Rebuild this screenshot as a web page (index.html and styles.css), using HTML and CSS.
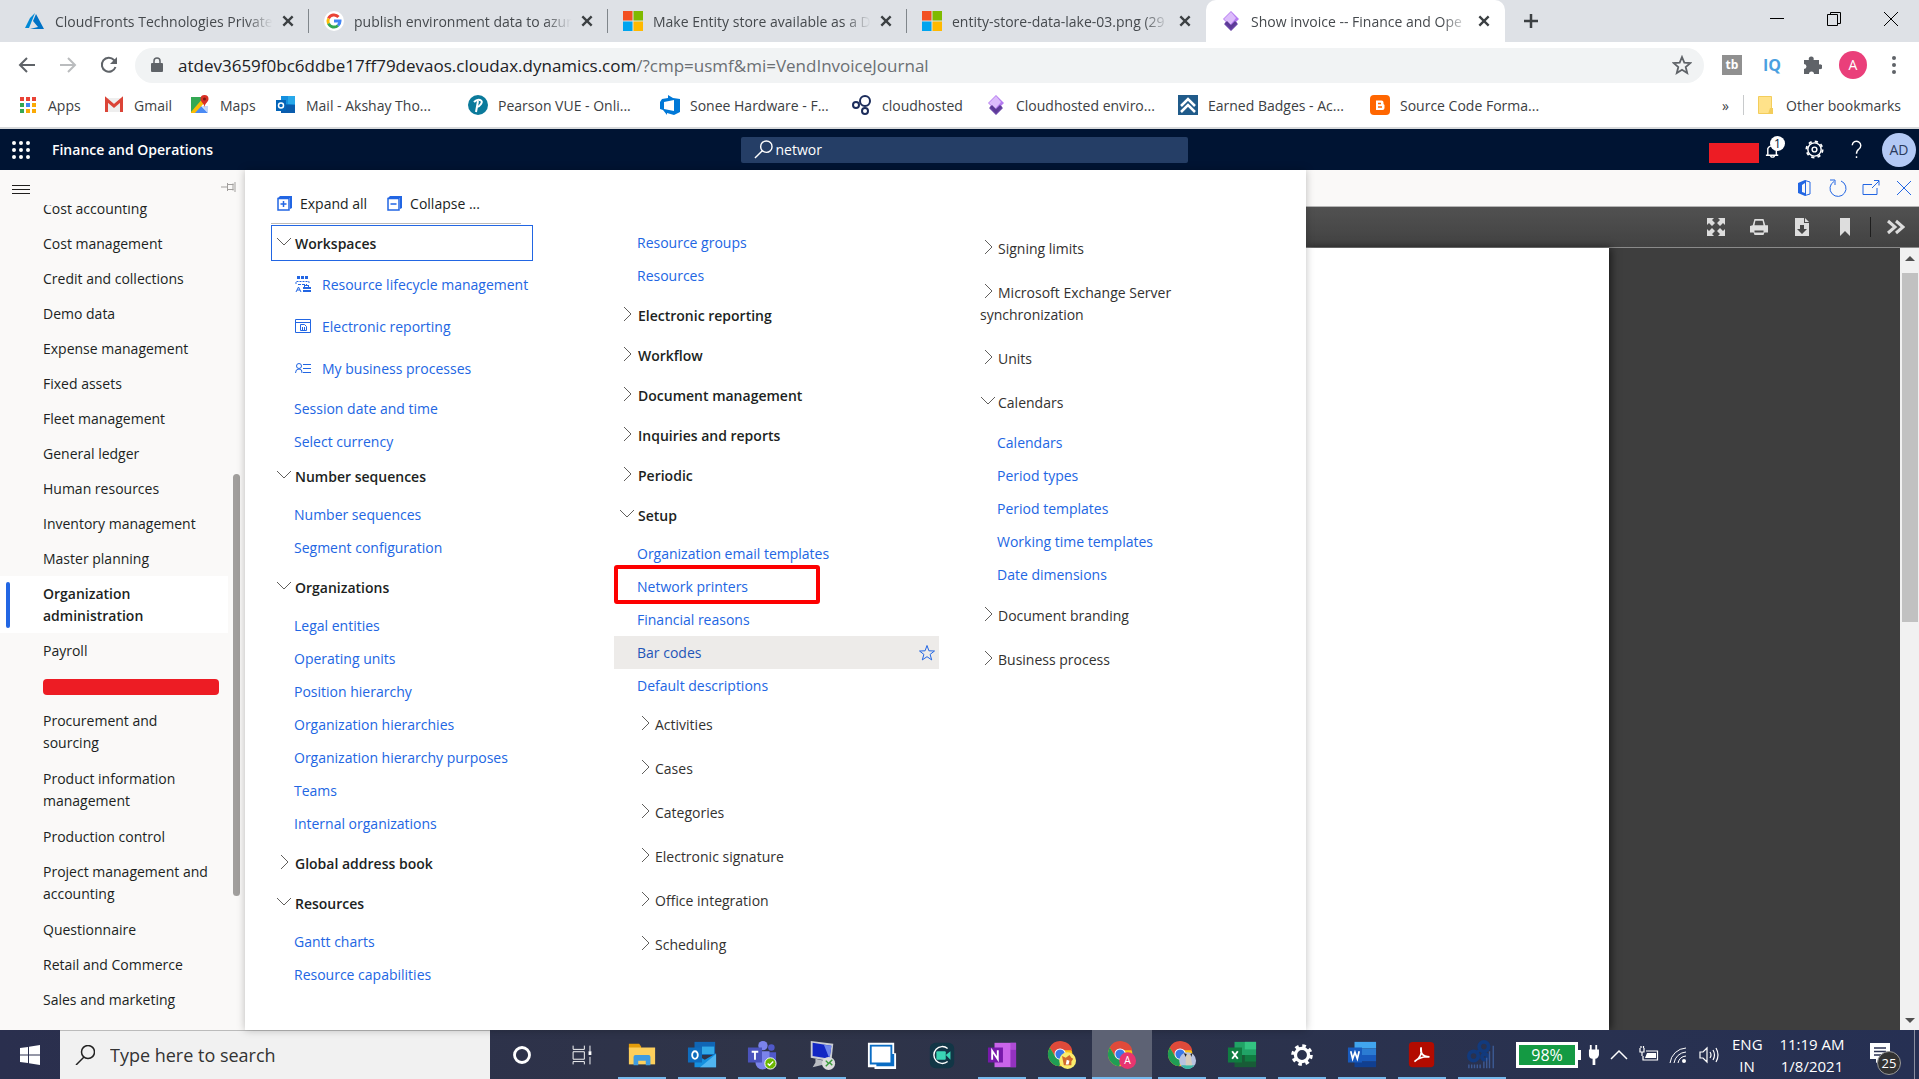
FILE: index.html
```html
<!DOCTYPE html>
<html lang="en">
<head>
<meta charset="UTF-8">
<meta name="viewport" content="width=device-width, initial-scale=1.0">
<title>Show invoice -- Finance and Operations</title>
<link rel="stylesheet" href="styles.css">
</head>
<body>

<svg class="sprite" aria-hidden="true">
<symbol id="down" viewBox="0 0 16 16"><path d="M1 4l7 7 7-7" fill="none" stroke="#605e5c"/></symbol>
<symbol id="right" viewBox="0 0 16 16"><path d="M5 1l7 7-7 7" fill="none" stroke="#605e5c"/></symbol>
<symbol id="cross" viewBox="0 0 12 12"><path d="M2 2l8 8M10 2l-8 8" fill="none" stroke="#3c4043" stroke-width="2"/></symbol>
<symbol id="ms" viewBox="0 0 20 20"><path fill="#f25022" d="M0 0h9.500v9.500H0z"/><path fill="#7fba00" d="M10.500 0H20v9.500h-9.500z"/><path fill="#00a4ef" d="M0 10.500h9.500V20H0z"/><path fill="#ffb900" d="M10.500 10.500H20V20h-9.500z"/></symbol>
<symbol id="lcs" viewBox="0 0 20 20"><path fill="#6b46a8" d="M10 20l-7-7 3-3 4 3 4-3 3 3z"/><path fill="#b57bf0" d="M10 0l8 8-8 8-8-8z"/><path fill="#dcbcfb" d="M10 1l5 6-6 7-6-6z"/><path fill="#5c3a96" d="M4 12l2-2 4 4 4-4 2 2-6 6z"/></symbol>
<symbol id="chrome" viewBox="0 0 32 32"><circle cx="14" cy="15" r="13" fill="#fbc116"/><path fill="#e04a3a" d="M3 8a13 13 0 0 1 24 3H14l-5 7z"/><path fill="#1f9d55" d="M3 8l6 10 6 4-2 6A13 13 0 0 1 3 8z"/><circle cx="14" cy="15" r="6" fill="#fff"/><circle cx="14" cy="15" r="5" fill="#3b78e7"/></symbol>
</svg>

<header class="tabs">
<div class="tab">
<svg class="icon" viewBox="0 0 20 20"><path fill="#0089d6" d="M10 2L5 7 0 17h4z"/><path fill="#0072c6" d="M11 3l8 15H5l8-2-5-6z"/></svg>
<span class="tab-title">CloudFronts Technologies Private</span>
<button class="tab-close" aria-label="Close"><svg><use href="#cross"/></svg></button>
</div>
<div class="tab">
<svg class="icon" viewBox="0 0 20 20"><circle cx="10" cy="10" r="10" fill="#fff"/><g fill="none" stroke-width="3"><path stroke="#ea4335" d="M4.500 7.500A6 6 0 0 1 14.500 6"/><path stroke="#fbbc05" d="M4.500 7.500a6 6 0 0 0 0 5"/><path stroke="#34a853" d="M4.500 12.500a6 6 0 0 0 9.500 2"/><path stroke="#4285f4" d="M14 14.500a6 6 0 0 0 2-4.500h-6"/></g></svg>
<span class="tab-title">publish environment data to azur</span>
<button class="tab-close" aria-label="Close"><svg><use href="#cross"/></svg></button>
</div>
<div class="tab">
<svg class="icon"><use href="#ms"/></svg>
<span class="tab-title">Make Entity store available as a D</span>
<button class="tab-close" aria-label="Close"><svg><use href="#cross"/></svg></button>
</div>
<div class="tab last">
<svg class="icon"><use href="#ms"/></svg>
<span class="tab-title">entity-store-data-lake-03.png (29</span>
<button class="tab-close" aria-label="Close"><svg><use href="#cross"/></svg></button>
</div>
<div class="tab active">
<svg class="icon"><use href="#lcs"/></svg>
<span class="tab-title">Show invoice -- Finance and Ope</span>
<button class="tab-close" aria-label="Close"><svg><use href="#cross"/></svg></button>
</div>
<button class="new-tab" aria-label="New tab"><svg viewBox="0 0 16 16"><path d="M8 1v14M1 8h14" stroke="#3c4043" stroke-width="2.500"/></svg></button>
<div class="window-buttons">
<button aria-label="Minimize"><svg viewBox="0 0 14 14"><path d="M0 6.500h14" stroke="#000"/></svg></button>
<button aria-label="Restore"><svg viewBox="0 0 14 14"><path d="M.5 2.500h10v11H.5zM3.500 2.500v-2h10v11h-3" fill="none" stroke="#000"/></svg></button>
<button aria-label="Close window"><svg viewBox="0 0 14 14"><path d="M0 0l14 14M14 0L0 14" stroke="#000"/></svg></button>
</div>
</header>

<div class="toolbar">
<button class="nav-btn" aria-label="Back"><svg viewBox="0 0 18 18"><path d="M17 9H2M9 2L2 9l7 7" fill="none" stroke="#5f6368" stroke-width="2"/></svg></button>
<button class="nav-btn" aria-label="Forward"><svg viewBox="0 0 18 18"><path d="M1 9h15M9 2l7 7-7 7" fill="none" stroke="#babcbe" stroke-width="2"/></svg></button>
<button class="nav-btn" aria-label="Reload"><svg viewBox="0 0 18 18"><path d="M15.500 11A7 7 0 1 1 14 4l2 2" fill="none" stroke="#5f6368" stroke-width="2"/><path fill="#5f6368" d="M17 1v7h-7z"/></svg></button>
<div class="omnibox">
<svg class="lock" viewBox="0 0 12 16"><path d="M3 7V4a3 3 0 0 1 6 0v3" fill="none" stroke="#5f6368" stroke-width="1.500"/><rect y="6" width="12" height="9" rx="1" fill="#5f6368"/></svg>
<span class="url">atdev3659f0bc6ddbe17ff79devaos.cloudax.dynamics.com<span>/?cmp=usmf&amp;mi=VendInvoiceJournal</span></span>
<svg class="fav" viewBox="0 0 20 20"><path d="M10 2l2.300 5.600 6 .5-4.600 3.900 1.500 6L10 14.800 4.800 18l1.500-6L1.700 8.100l6-.5z" fill="none" stroke="#5f6368" stroke-width="1.800"/></svg>
</div>
<div class="extensions">
<span class="ext-tb">tb</span>
<span class="ext-iq">IQ</span>
<svg class="icon" viewBox="0 0 20 20"><path fill="#5f6368" d="M2 5h5a2.500 2.500 0 1 1 4.500 0H17v4.500a2.500 2.500 0 1 1 0 4.500v5h-5a2.500 2.500 0 0 0-5 0H2v-5a2.500 2.500 0 0 0 0-5z"/></svg>
<span class="ext-user">A</span>
<svg class="icon" viewBox="0 0 20 20"><g fill="#5f6368"><circle cx="10" cy="3" r="2"/><circle cx="10" cy="10" r="2"/><circle cx="10" cy="17" r="2"/></g></svg>
</div>
</div>

<nav class="bookmarks">
<a href="#" class="bm"><svg class="icon" viewBox="0 0 20 20"><g fill="#ea4335"><path d="M2 2h4v4H2zM8 2h4v4H8zM14 2h4v4h-4z"/></g><path fill="#34a853" d="M2 8h4v4H2zM2 14h4v4H2z"/><path fill="#4285f4" d="M8 8h4v4H8z"/><path fill="#fbaa05" d="M14 8h4v4h-4zM8 14h4v4H8zM14 14h4v4h-4z"/></svg>Apps</a>
<a href="#" class="bm"><svg class="icon" viewBox="0 0 20 20"><path fill="#eee" d="M1 3h18v14H1z"/><path d="M2.500 17V4.500L10 11l7.500-6.500V17" fill="none" stroke="#db4437" stroke-width="3"/></svg>Gmail</a>
<a href="#" class="bm"><svg class="icon" viewBox="0 0 20 20"><path fill="#34a853" d="M1 2h13L3 18H1z"/><path fill="#4a8af4" d="M10 10l8 8H3z"/><path fill="#fbbc05" d="M14 2l3 3L5 18H1v-1z"/><path fill="#c3d5f8" d="M12 11h6v7z"/><path fill="#d93025" d="M14.500 0a4 4 0 0 1 4 4c0 3-3.500 4-4 8-.5-4-4-5-4-8a4 4 0 0 1 4-4z"/><circle cx="14.500" cy="4" r="1.500" fill="#7d1a12"/></svg>Maps</a>
<a href="#" class="bm wide"><svg class="icon" viewBox="0 0 20 20"><path fill="#1490df" d="M5 1h14v15H5z"/><path fill="#28a8ea" d="M12 1h7v8h-7z"/><path fill="#0a5cad" d="M5 9l14 1v8H5z"/><path fill="#0364b8" d="M0 5h10v11H0z"/><circle cx="5" cy="10.500" r="2.500" fill="none" stroke="#fff" stroke-width="1.500"/></svg>Mail - Akshay Tho...</a>
<a href="#" class="bm wide"><svg class="icon" viewBox="0 0 20 20"><circle cx="10" cy="10" r="10" fill="#0b7a9b"/><path d="M8 17l2-11M6 7q3-3 6-2t1 4-4 3" fill="none" stroke="#fff" stroke-width="2"/></svg>Pearson VUE - Onli...</a>
<a href="#" class="bm wide"><svg class="icon" viewBox="0 0 20 20"><path d="M0 7l2-3 6-1V0l5 3 7 1v13l-6 3-7-2v2l-4-5-3-1z" fill="#0078d7"/><path fill="#fff" d="M4 7l10-2v11L4 14z"/></svg>Sonee Hardware - F...</a>
<a href="#" class="bm medium"><svg class="icon" viewBox="0 0 20 20"><g fill="none" stroke="#1b2c5b" stroke-width="2"><circle cx="13" cy="6" r="5"/><circle cx="4" cy="10" r="3"/><circle cx="13" cy="16" r="3"/></g></svg>cloudhosted</a>
<a href="#" class="bm wide"><svg class="icon"><use href="#lcs"/></svg>Cloudhosted enviro...</a>
<a href="#" class="bm wide"><svg class="icon" viewBox="0 0 20 20"><path fill="#205b8a" d="M0 0h20v20H0z"/><path d="M3 11l7-7 7 7M3 17l7-7 7 7" fill="none" stroke="#fff" stroke-width="2.500"/></svg>Earned Badges - Ac...</a>
<a href="#" class="bm wide"><svg class="icon" viewBox="0 0 20 20"><rect width="20" height="20" rx="4" fill="#ff6600"/><path d="M6 5.500h5.500a2 2 0 0 1 2 2V9l1 1v3a2 2 0 0 1-2 2H6z" fill="#fff"/><path d="M8 8.500h3M8 12h4" stroke="#ff6600" stroke-width="1.500"/></svg>Source Code Forma...</a>
<div class="bm-other">
<span class="more">»</span>
<a href="#"><svg class="icon" viewBox="0 0 20 20"><path fill="#ffe28a" stroke="#f3cd5b" d="M2.500 1.500h13v17h-13z"/><path fill="#f3cd5b" d="M14 13h3v6h-5z"/></svg>Other bookmarks</a>
</div>
</nav>

<header class="app-header">
<div class="brand">
<button class="waffle" aria-label="App launcher"><svg viewBox="0 0 18 18"><path d="M2 2h18M2 9h18M2 16h18" stroke="#fff" stroke-width="4" stroke-linecap="round" stroke-dasharray="0 7"/></svg></button>
<span class="app-title">Finance and Operations</span>
</div>
<label class="app-search">
<svg viewBox="0 0 20 20"><circle cx="13" cy="7" r="6" fill="none" stroke="#fff" stroke-width="1.500"/><path d="M9 11l-8 8" stroke="#fff" stroke-width="1.500"/></svg>
<input type="text" value="networ" aria-label="Search for a page">
</label>
<div class="app-actions">
<span class="masked"></span>
<button class="bell" aria-label="Notifications"><svg viewBox="0 0 20 20"><path d="M2 16h13M4 16V9a5 5 0 0 1 9 0v7M7 16a2 2 0 0 0 4 0" fill="none" stroke="#fff" stroke-width="1.500"/></svg><span>1</span></button>
<button class="gear" aria-label="Settings"><svg viewBox="0 0 20 20"><circle cx="10" cy="10" r="7" fill="none" stroke="#fff" stroke-width="1.500"/><circle cx="10" cy="10" r="8.500" fill="none" stroke="#fff" stroke-width="2" stroke-dasharray="3.340 3.340"/><circle cx="10" cy="10" r="2.500" fill="none" stroke="#fff" stroke-width="1.500"/></svg></button>
<button class="help" aria-label="Help"><svg viewBox="0 0 20 20"><path d="M5.500 5.500a4.500 4.500 0 1 1 7 4Q10 11 10 14.500M10 17v2" fill="none" stroke="#fff" stroke-width="1.500"/></svg></button>
<span class="avatar">AD</span>
</div>
</header>

<main class="workspace">
<aside class="side">
<div class="side-top">
<button aria-label="Expand navigation"><svg viewBox="0 0 18 10"><path d="M0 .5h18M0 4.500h18M0 8.500h18" stroke="#201f1e"/></svg></button>
<svg class="pin" viewBox="0 0 15 10"><path d="M0 5h6M6.500 1v8M6.500 2.500h6M6.500 7.500h6M14 0v10M12 1.500v7" fill="none" stroke="#a19f9d"/></svg>
</div>
<div class="side-scroll">
<ul>
<li><a href="#">Cost accounting</a></li>
<li><a href="#">Cost management</a></li>
<li><a href="#">Credit and collections</a></li>
<li><a href="#">Demo data</a></li>
<li><a href="#">Expense management</a></li>
<li><a href="#">Fixed assets</a></li>
<li><a href="#">Fleet management</a></li>
<li><a href="#">General ledger</a></li>
<li><a href="#">Human resources</a></li>
<li><a href="#">Inventory management</a></li>
<li><a href="#">Master planning</a></li>
<li class="selected"><a href="#">Organization administration</a></li>
<li><a href="#">Payroll</a></li>
<li><a href="#" aria-label="Hidden module"><span class="redacted"></span></a></li>
<li class="tall"><a href="#">Procurement and sourcing</a></li>
<li class="tall"><a href="#">Product information management</a></li>
<li><a href="#">Production control</a></li>
<li class="tall"><a href="#">Project management and accounting</a></li>
<li><a href="#">Questionnaire</a></li>
<li><a href="#">Retail and Commerce</a></li>
<li><a href="#">Sales and marketing</a></li>
<li><a href="#">Service management</a></li>
</ul>
</div>
<div class="side-thumb"></div>
</aside>

<section class="panel">
<div class="panel-tools">
<button><svg viewBox="0 0 15 15"><path fill="#2266e3" d="M3 0h12v12l-2 1V2H1z"/><path d="M1 2.500h11v11.500H1zM3.500 8h6M6.500 5v6" fill="none" stroke="#2266e3" stroke-width="1.500"/></svg>Expand all</button>
<button><svg viewBox="0 0 15 15"><path fill="#2266e3" d="M3 0h12v12l-2 1V2H1z"/><path d="M1 2.500h11v11.500H1zM3.500 8h6" fill="none" stroke="#2266e3" stroke-width="1.500"/></svg>Collapse ...</button>
</div>
<div class="columns">
<div class="col">
<h3 class="focused"><svg><use href="#down"/></svg>Workspaces</h3>
<ul class="spaces">
<li><a href="#"><svg viewBox="0 0 16 16"><g fill="none" stroke="#2266e3"><path d="M2 1.500h11" stroke-width="3" stroke-dasharray="3 1"/><path d="M1 8V5.500h13V8" stroke-dasharray="2 1"/><path d="M3 8.500h9" stroke-dasharray="3 1"/><path d="M1 16l2.500-5L6 16M2 14h3"/></g><path fill="#2266e3" d="M9 9h5v2h2v5H8v-5h1z"/><path d="M8 13.500h8M10 10.500h3" stroke="#fff"/></svg>Resource lifecycle management</a></li>
<li><a href="#"><svg viewBox="0 0 16 16"><g fill="none" stroke="#2266e3"><path d="M.5 1.500h15v13H.5zM.5 4.500h15"/><path d="M5.500 6.500h4l2 2v4h-6z"/><path d="M7.500 9v3M9.500 9v3"/></g></svg>Electronic reporting</a></li>
<li><a href="#"><svg viewBox="0 0 16 16"><g fill="none" stroke="#2266e3"><circle cx="4" cy="6" r="2.500"/><path d="M.5 13q0-4 3.500-4t3 4M8 4.500h8M8 8.500h8M8 12.500h8"/></g></svg>My business processes</a></li>
</ul>
<ul class="links">
<li><a href="#">Session date and time</a></li>
<li><a href="#">Select currency</a></li>
</ul>
<h3><svg><use href="#down"/></svg>Number sequences</h3>
<ul class="links spaced">
<li><a href="#">Number sequences</a></li>
<li><a href="#">Segment configuration</a></li>
</ul>
<h3><svg><use href="#down"/></svg>Organizations</h3>
<ul class="links spaced">
<li><a href="#">Legal entities</a></li>
<li><a href="#">Operating units</a></li>
<li><a href="#">Position hierarchy</a></li>
<li><a href="#">Organization hierarchies</a></li>
<li><a href="#">Organization hierarchy purposes</a></li>
<li><a href="#">Teams</a></li>
<li><a href="#">Internal organizations</a></li>
</ul>
<h3><svg><use href="#right"/></svg>Global address book</h3>
<h3><svg><use href="#down"/></svg>Resources</h3>
<ul class="links">
<li><a href="#">Gantt charts</a></li>
<li><a href="#">Resource capabilities</a></li>
</ul>
</div>

<div class="col next">
<ul class="links spaced">
<li><a href="#">Resource groups</a></li>
<li><a href="#">Resources</a></li>
</ul>
<h3><svg><use href="#right"/></svg>Electronic reporting</h3>
<h3><svg><use href="#right"/></svg>Workflow</h3>
<h3><svg><use href="#right"/></svg>Document management</h3>
<h3><svg><use href="#right"/></svg>Inquiries and reports</h3>
<h3><svg><use href="#right"/></svg>Periodic</h3>
<h3><svg><use href="#down"/></svg>Setup</h3>
<ul class="links">
<li><a href="#">Organization email templates</a></li>
<li class="marked"><a href="#">Network printers</a></li>
<li><a href="#">Financial reasons</a></li>
<li class="hovered"><a href="#">Bar codes</a><svg viewBox="0 0 18 18"><path d="M9 1.500l1.900 5.300 5.600.2-4.400 3.400 1.600 5.500L9 12.700l-4.700 3.200 1.600-5.500L1.500 7l5.600-.2z" fill="none" stroke="#2266e3"/></svg></li>
<li><a href="#">Default descriptions</a></li>
</ul>
<h4><svg><use href="#right"/></svg>Activities</h4>
<h4><svg><use href="#right"/></svg>Cases</h4>
<h4><svg><use href="#right"/></svg>Categories</h4>
<h4><svg><use href="#right"/></svg>Electronic signature</h4>
<h4><svg><use href="#right"/></svg>Office integration</h4>
<h4><svg><use href="#right"/></svg>Scheduling</h4>
</div>

<div class="col next">
<h4><svg><use href="#right"/></svg>Signing limits</h4>
<h4><svg><use href="#right"/></svg>Microsoft Exchange Server synchronization</h4>
<h4><svg><use href="#right"/></svg>Units</h4>
<h4><svg><use href="#down"/></svg>Calendars</h4>
<ul class="links sub">
<li><a href="#">Calendars</a></li>
<li><a href="#">Period types</a></li>
<li><a href="#">Period templates</a></li>
<li><a href="#">Working time templates</a></li>
<li><a href="#">Date dimensions</a></li>
</ul>
<h4><svg><use href="#right"/></svg>Document branding</h4>
<h4><svg><use href="#right"/></svg>Business process</h4>
</div>
</div>
</section>

<section class="viewer">
<div class="form-tools">
<button aria-label="Open in Office"><svg viewBox="0 0 18 18"><path fill="#2266e3" d="M2 4l7-3v3L6 6v7l3 1v3l-7-3z"/><path d="M9 1.500l5 1.500v12l-5 1.500M9.500 1.500v15" fill="none" stroke="#2266e3"/></svg></button>
<button aria-label="Refresh"><svg viewBox="0 0 18 18"><path d="M5 2.500A8 8 0 1 0 12 2M1 1h5v5" fill="none" stroke="#2266e3"/></svg></button>
<button aria-label="Open in new window"><svg viewBox="0 0 18 18"><path d="M10 5.500H1v10h14V9M10 9l7-7M12 1.500h5v5" fill="none" stroke="#2266e3"/></svg></button>
<button aria-label="Close page"><svg viewBox="0 0 18 18"><path d="M2 2l14 14M16 2L2 16" fill="none" stroke="#2266e3"/></svg></button>
</div>
<div class="pdf-tools">
<button aria-label="Presentation mode"><svg viewBox="0 0 18 18"><path fill="#ddd" d="M0 0h7L5 2l3 3-3 3-3-3-2 2zM18 0v7l-2-2-3 3-3-3 3-3-2-2zM0 18v-7l2 2 3-3 3 3-3 3 2 2zM18 18h-7l2-2-3-3 3-3 3 3 2-2z"/></svg></button>
<button aria-label="Print"><svg viewBox="0 0 20 18"><path fill="#ddd" d="M5 0h10l2 7h3v8h-4l-1 3H5l-1-3H0V8l3-1z"/><path fill="#484848" d="M6 2h8l1 5H5zM5 13h10v2H5z"/></svg></button>
<button aria-label="Download"><svg viewBox="0 0 18 18"><path fill="#ddd" d="M2 0h9v5h5v13H2zM12 0l4 4h-4z"/><path fill="#484848" d="M7 7h4v4h3l-5 5-5-5h3z"/></svg></button>
<button aria-label="Bookmark"><svg viewBox="0 0 18 18"><path fill="#ddd" d="M4 0h10v18l-5-5-5 5z"/></svg></button>
<span class="split"></span>
<button aria-label="Tools"><svg viewBox="0 0 18 18"><path d="M1 3l7 6-7 6M9 3l7 6-7 6" fill="none" stroke="#ddd" stroke-width="3"/></svg></button>
</div>
<div class="pdf-body">
<div class="pdf-page"></div>
<div class="pdf-scroll">
<span class="arrow up"></span>
<span class="thumb"></span>
<span class="arrow down"></span>
</div>
</div>
</section>
</main>

<footer class="taskbar">
<button class="start" aria-label="Start"><svg viewBox="0 0 20 20"><path fill="#fff" d="M0 3l8-1v7.500H0zM9 1.800L20 0v9.500H9zM0 10.500h8V18l-8-1zM9 10.500h11V20L9 18.200z"/></svg></button>
<label class="task-search">
<svg viewBox="0 0 20 20"><circle cx="13" cy="7" r="6.500" fill="none" stroke="#222" stroke-width="1.500"/><path d="M9 12l-8 8" stroke="#222" stroke-width="1.500"/></svg>
<input type="text" placeholder="Type here to search" aria-label="Type here to search">
</label>
<div class="apps">
<button aria-label="Cortana"><svg viewBox="0 0 32 32"><circle cx="16" cy="16" r="8" fill="none" stroke="#fff" stroke-width="3"/></svg></button>
<button aria-label="Task view"><svg viewBox="0 0 32 32"><path d="M6.500 6v4h12V6M6.500 12.500h12v8h-12zM6.500 26v-3h12v3M24.500 6v6M24.500 18v8" fill="none" stroke="#fff"/><path fill="#fff" d="M23 12h3v4h-3z"/></svg></button>
<button class="open" aria-label="File Explorer"><svg viewBox="0 0 32 32"><path fill="#e39c0b" d="M2 4h11l2 3v3H2z"/><path fill="#fdcf5c" d="M2 8h28v18H2z"/><path fill="#3f9be0" d="M7 18q0-2 2-2h14q2 0 2 2v9h-5v-5h-8v5H7z"/></svg></button>
<button class="open" aria-label="Outlook"><svg viewBox="0 0 32 32"><path fill="#1066b5" d="M8 2h22v14H8z"/><path fill="#32a9e7" d="M16 7h13v8H16z"/><path fill="#1490df" d="M8 15l11 6 12-7v15H8z"/><path fill="#50b5f0" d="M31 15L14 29h17z"/><path fill="#0f6cbd" d="M1 8h15v16H1z"/><ellipse cx="8.500" cy="16" rx="3" ry="4" fill="none" stroke="#fff" stroke-width="2"/></svg></button>
<button class="open" aria-label="Teams"><svg viewBox="0 0 32 32"><circle cx="17" cy="6" r="5" fill="#7b83eb"/><circle cx="26" cy="8" r="3.500" fill="#5059c9"/><path fill="#5059c9" d="M20 13h11v10a6 6 0 0 1-11 0z"/><path fill="#7b83eb" d="M9 12h15v12a7 7 0 0 1-15 0z"/><path fill="#4b53bc" d="M1 8h15v16H1z"/><path d="M5 12.500h7M8.500 12v9" stroke="#fff" stroke-width="2"/><circle cx="25" cy="25" r="6" fill="#6bb700" stroke="#fff"/><path d="M22 25l2 2 4-4" fill="none" stroke="#fff" stroke-width="1.500"/></svg></button>
<button class="open" aria-label="Remote Desktop"><svg viewBox="0 0 32 32"><path fill="#c9ccd2" d="M4 1l24 3-2 19-22-4z"/><path fill="#1226c4" d="M6 3l20 3-2 14-18-3z"/><path fill="#6e86ec" d="M18 5l8 1-2 14z"/><path fill="#b9bcc2" d="M9 20l9 2v4l-12 3 3-5z"/><circle cx="23" cy="25" r="7" fill="#dcdcdc"/><path d="M20 22l3 3-3 3M27 21l-3 3 3 3" fill="none" stroke="#3a9b3a" stroke-width="1.500"/></svg></button>
<button aria-label="Remote"><svg viewBox="0 0 32 32"><path fill="#fff" d="M1 3h28v11h2v17H8v-2H1z"/><path fill="#0a6cc4" d="M3 5h24v10h2v13H10v-2H3z"/><path fill="#fff" d="M5 7h20v17H5z"/></svg></button>
<button aria-label="Recorder"><svg viewBox="0 0 32 32"><rect x="3" y="3" width="26" height="27" rx="6" fill="#123646"/><path d="M22 9a9 9 0 1 0 0 14" fill="none" stroke="#fff" stroke-width="1.500"/><rect x="10" y="12" width="10" height="9" rx="1" fill="#3ad6b5"/><path fill="#3ad6b5" d="M20 16l5-4v9z"/></svg></button>
<button class="open" aria-label="OneNote"><svg viewBox="0 0 32 32"><path fill="#ca64ea" d="M8 3h23v26H8z"/><path fill="#9332bf" d="M25 10h6v19h-6z"/><path fill="#ae4bd5" d="M25 3h6v7h-6z"/><path fill="#7719aa" d="M1 8h16v16H1z"/><path d="M5.500 21V11.500l6 9V11" fill="none" stroke="#fff" stroke-width="2"/></svg></button>
<button class="open" aria-label="Chrome"><svg viewBox="0 0 32 32"><use href="#chrome"/><circle cx="22" cy="22" r="9" fill="#f9ec6c"/><path fill="#d0692c" d="M16 17l4 2 4-3 2 3 2 1-2 3v4h-8l-1-5z"/><path fill="#fff" d="M21 21l3 1-1 4h-3z"/></svg></button>
<button class="open current" aria-label="Chrome work profile"><svg viewBox="0 0 32 32"><use href="#chrome"/><circle cx="22" cy="22" r="9" fill="#e8356f"/><text x="22" y="26" text-anchor="middle" font-size="11" fill="#fff">A</text></svg></button>
<button class="open" aria-label="Chrome third profile"><svg viewBox="0 0 32 32"><use href="#chrome"/><circle cx="22" cy="22" r="9" fill="#b9c3e0"/><path fill="#3bb8a4" d="M15 27h14q-3 4-7 4t-7-4z"/><path fill="#d8cdbb" d="M20 15l5 1 1 6 1 5h-7z"/><path fill="#222" d="M18 14l3 1-1 3zM25 15l2-1-1 4z"/></svg></button>
<button class="open" aria-label="Excel"><svg viewBox="0 0 32 32"><path fill="#21a366" d="M8 2h23v14H8z"/><path fill="#33c481" d="M19 2h12v8H19z"/><path fill="#185c37" d="M8 16h23v13H8z"/><path fill="#107c41" d="M19 16h12v7H19zM1 8h15v16H1z"/><path d="M5.500 12l6 8M11.500 12l-6 8" stroke="#fff" stroke-width="2"/></svg></button>
<button class="open" aria-label="Settings"><svg viewBox="0 0 32 32"><circle cx="16" cy="16" r="7" fill="none" stroke="#fff" stroke-width="3.500"/><circle cx="16" cy="16" r="9.500" fill="none" stroke="#fff" stroke-width="4" stroke-dasharray="3.730 3.730"/></svg></button>
<button class="open" aria-label="Word"><svg viewBox="0 0 32 32"><path fill="#41a5ee" d="M8 2h23v7H8z"/><path fill="#2b7cd3" d="M8 9h23v7H8z"/><path fill="#185abd" d="M8 16h23v7H8z"/><path fill="#103f91" d="M8 23h23v6H8z"/><path fill="#185abd" d="M1 8h15v16H1z"/><path d="M4 12l2 8 2.500-7 2.500 7 2-8" fill="none" stroke="#fff" stroke-width="1.800"/></svg></button>
<button class="open" aria-label="Acrobat"><svg viewBox="0 0 32 32"><rect x="2" y="2" width="27" height="27" rx="4" fill="#b30b00"/><path d="M8 23q9-5 7-15-2 9 9 10-9-1-16 5z" fill="none" stroke="#fff" stroke-width="1.800"/></svg></button>
<button class="open" aria-label="Services"><svg viewBox="0 0 32 32"><g fill="none" stroke="#123a7d" stroke-width="4"><circle cx="18" cy="7" r="5"/><circle cx="7" cy="17" r="5"/><circle cx="19" cy="18" r="3"/></g><path d="M13 11l-3 3" stroke="#123a7d" stroke-width="3"/><path d="M2 30v-4M5 30v-4M8 30v-4M11 30v-4M14 30v-4M18 30V23M21 30V19M24 30V12M28 30V6" stroke="#3d5a94" stroke-width="1.500"/></svg></button>
</div>
<div class="tray">
<span class="charge">98%</span>
<svg class="plug" viewBox="0 0 12 22"><path fill="#fff" d="M2 0h2v5h4V0h2v5h2v6q-1 4-4 4v7H5v-7q-4 0-4-4V5h1z"/></svg>
<svg class="tray-icon" viewBox="0 0 20 20"><path d="M2 14l8-8 8 8" fill="none" stroke="#fff" stroke-width="1.500"/></svg>
<svg class="tray-icon" viewBox="0 0 20 20"><path d="M7 6h11.500v9H4v-4M1 3v4h4V3M3 7v4M2 1v2M4.500 1v2" fill="none" stroke="#fff" stroke-width="1.200"/><path fill="#fff" d="M8 8h9v5H6z"/></svg>
<svg class="tray-icon" viewBox="0 0 20 20"><g fill="none" stroke="#fff"><path d="M1 18A17 17 0 0 1 17 3M5 18A13 13 0 0 1 17 7M9 18a9 9 0 0 1 8-7"/></g><circle cx="15" cy="16" r="2" fill="#fff"/></svg>
<svg class="tray-icon" viewBox="0 0 20 20"><path d="M1 7h3l4-4v14l-4-4H1zM11 7q2 3 0 6M14 5q3 5 0 10M17 3q4 7 0 14" fill="none" stroke="#fff" stroke-width="1.200"/></svg>
<span class="lang">ENG<br>IN</span>
<span class="clock">11:19 AM<br>1/8/2021</span>
<div class="notes"><svg viewBox="0 0 20 20"><path fill="#fff" d="M0 0h20v16h-8l-6 4v-4H0z"/><path d="M4 5h12M4 8.500h12M4 12h8" stroke="#2a3152" stroke-width="1.500"/></svg><span>25</span></div>
<span class="peek"></span>
</div>
</footer>

</body>
</html>
```

FILE: styles.css
```css
*,
*::before,
*::after {
box-sizing: border-box;
}

body {
margin: 0;
height: 100vh;
overflow: hidden;
display: flex;
flex-direction: column;
font-family: "Open Sans", "Noto Sans", sans-serif;
font-size: 14px;
color: #201f1e;
background: #fff;
}

a {
color: inherit;
text-decoration: none;
}

button {
display: flex;
align-items: center;
justify-content: center;
padding: 0;
border: 0;
background: none;
font: inherit;
color: inherit;
}

input {
border: 0;
padding: 0;
background: none;
font: inherit;
outline: none;
}

ul {
list-style: none;
margin: 0;
padding: 0;
}

svg {
flex: none;
}

.sprite {
display: none;
}

.icon {
width: 20px;
height: 20px;
}

/* browser tabs */
.tabs {
display: flex;
flex: none;
height: 42px;
padding-left: 10px;
background: #dee1e6;
color: #45494d;
}

.tab {
display: flex;
align-items: center;
flex: 0 1 299px;
min-width: 0;
padding: 0 14px 0 15px;
position: relative;
}

.tab::after {
content: "";
position: absolute;
right: 0;
top: 9px;
width: 1px;
height: 24px;
background: #80868b;
}

.tab.last::after,
.tab.active::after {
display: none;
}

.tab.active {
background: #fff;
border-radius: 10px 10px 0 0;
}

.tab-title {
flex: 1;
min-width: 0;
margin: 0 4px 0 10px;
overflow: hidden;
white-space: nowrap;
mask-image: linear-gradient(to right, #000 86%, transparent 98%);
}

.tab-close svg {
width: 14px;
height: 14px;
}

.new-tab {
width: 52px;
}

.new-tab svg {
width: 16px;
height: 16px;
}

.window-buttons {
display: flex;
margin-left: auto;
}

.window-buttons button {
width: 57px;
height: 38px;
}

.window-buttons svg {
width: 14px;
height: 14px;
}

/* address bar */
.toolbar {
display: flex;
align-items: center;
flex: none;
height: 46px;
padding-left: 6px;
}

.nav-btn {
width: 41px;
}

.nav-btn svg {
width: 18px;
height: 18px;
}

.omnibox {
display: flex;
align-items: center;
flex: 1;
height: 35px;
margin-left: 6px;
padding: 0 12px 0 16px;
border-radius: 18px;
background: #f1f3f4;
}

.lock {
width: 12px;
height: 16px;
}

.url {
flex: 1;
margin-left: 15px;
font-size: 17px;
color: #202124;
}

.url span {
color: #6b6f73;
}

.fav {
width: 20px;
height: 20px;
}

.extensions {
display: flex;
align-items: center;
gap: 20px;
padding: 0 15px 0 18px;
}

.ext-tb,
.ext-iq,
.ext-user {
width: 20px;
text-align: center;
font-weight: 700;
}

.ext-tb {
line-height: 20px;
background: #909090;
color: #fff;
font-size: 12px;
}

.ext-iq {
color: #4a9fe0;
font-size: 16px;
}

.ext-user {
width: 28px;
margin: 0 -3px;
line-height: 28px;
border-radius: 50%;
background: #ea3f7a;
color: #fff;
font-weight: 400;
}

/* bookmarks */
.bookmarks {
display: flex;
flex: none;
height: 41px;
padding: 0 18px;
border-bottom: 2px solid #d8dadc;
color: #3c4043;
white-space: nowrap;
}

.bm {
display: flex;
align-items: center;
gap: 10px;
width: 86px;
height: 34px;
}

.bm.wide {
width: 192px;
}

.bm.medium {
width: 134px;
}

.bm-other {
display: flex;
align-items: center;
gap: 14px;
height: 34px;
margin-left: auto;
}

.bm-other a {
display: flex;
align-items: center;
gap: 10px;
padding-left: 12px;
border-left: 1px solid #c8cacc;
}

/* app header */
.app-header {
display: flex;
align-items: center;
flex: none;
height: 41px;
background: #001433;
color: #fff;
}

.brand {
display: flex;
align-items: center;
flex: 1;
}

.waffle {
width: 42px;
}

.waffle svg {
width: 18px;
height: 18px;
}

.app-title {
margin-left: 10px;
font-weight: 600;
}

.app-search {
display: flex;
align-items: center;
width: 447px;
height: 26px;
margin-left: 12px;
padding-left: 13px;
border-radius: 2px;
background: #253e66;
}

.app-search svg {
width: 19px;
height: 19px;
}

.app-search input {
flex: 1;
margin-left: 3px;
color: #fff;
}

.app-actions {
display: flex;
align-items: center;
justify-content: flex-end;
flex: 1;
padding-right: 3px;
}

.app-actions button {
width: 42px;
}

.app-actions svg {
width: 19px;
height: 19px;
}

.app-actions .bell {
width: 34px;
position: relative;
}

.bell svg {
margin-right: 5px;
}

.bell span {
position: absolute;
left: 11px;
top: -4px;
width: 15px;
border-radius: 50%;
background: #fff;
color: #001433;
font-size: 12px;
line-height: 15px;
}

.masked {
width: 50px;
height: 20px;
margin-top: 6px;
background: #ed1c24;
}

.avatar {
width: 34px;
margin-left: 5px;
border-radius: 50%;
background: #b3c9f5;
color: #2a3a5c;
line-height: 34px;
text-align: center;
}

/* page body */
.workspace {
display: flex;
flex: 1;
min-height: 0;
background: #faf9f8;
}

.side {
position: relative;
display: flex;
flex-direction: column;
flex: none;
width: 245px;
}

.side-top {
display: flex;
align-items: flex-start;
justify-content: space-between;
flex: none;
height: 35px;
padding: 12px 9px 0 12px;
}

.side-top button {
padding-top: 3px;
}

.side-top button svg {
width: 18px;
height: 10px;
}

.pin {
width: 15px;
height: 10px;
}

.side-scroll {
flex: 1;
overflow: hidden;
}

.side-scroll ul {
width: 228px;
margin-top: -14px;
}

.side li {
position: relative;
padding: 7px 12px 6px 43px;
line-height: 22px;
}

.side li.tall {
padding-bottom: 7px;
}

.side li.selected {
background: #fff;
font-weight: 600;
}

.side li.selected::before {
content: "";
position: absolute;
left: 6px;
top: 6px;
bottom: 5px;
width: 4px;
border-radius: 2px;
background: #2266e3;
}

.redacted {
display: block;
width: 176px;
height: 16px;
margin: 4px 0 2px;
border-radius: 4px;
background: #ed1c24;
}

.side-thumb {
position: absolute;
right: 5px;
top: 304px;
width: 7px;
height: 422px;
border-radius: 4px;
background: #a19f9d;
}

/* module menu */
.panel {
position: relative;
flex: none;
width: 1061px;
padding-left: 26px;
background: #fff;
box-shadow: 0 0 8px rgba(0, 0, 0, 0.25);
}

.panel-tools {
display: flex;
gap: 20px;
width: 250px;
height: 54px;
padding: 14px 0 0 6px;
border-bottom: 1px solid #bebbb8;
}

.panel-tools button {
gap: 8px;
}

.panel-tools svg {
width: 15px;
height: 15px;
}

.columns {
display: grid;
grid-template-columns: 325px 325px 325px;
gap: 18px;
padding-top: 1px;
}

.col.next {
padding-top: 1px;
}

h3,
h4 {
margin: 0;
font-size: 14px;
line-height: 22px;
}

h3 {
height: 36px;
margin-bottom: 4px;
padding: 8px 0 0 5px;
font-weight: 600;
}

h4 {
padding: 12px 40px 10px 23px;
font-weight: 400;
color: #323130;
}

h3 svg,
h4 svg {
width: 16px;
height: 16px;
margin-right: 3px;
vertical-align: -1px;
}

h4 svg {
margin-right: 2px;
}

.focused {
width: 262px;
outline: 1px solid #2266e3;
outline-offset: -1px;
}

.spaces {
margin-top: -2px;
padding: 0 0 3px 24px;
}

.spaces a {
display: flex;
align-items: center;
gap: 11px;
height: 42px;
color: #2266e3;
white-space: nowrap;
}

.spaces svg {
width: 16px;
height: 16px;
}

.links li {
position: relative;
padding-left: 23px;
line-height: 33px;
color: #2266e3;
}

.links.spaced {
margin-bottom: 5px;
}

.links.sub {
padding: 2px 0;
}

.links.sub li {
padding-left: 40px;
}

.links li.hovered {
display: flex;
align-items: center;
justify-content: space-between;
padding-right: 3px;
background: #edebe9;
color: #1f56b8;
}

.hovered svg {
width: 18px;
height: 18px;
}

/* outlined menu entry */
.marked::before {
content: "";
position: absolute;
left: 0;
top: -5px;
width: 206px;
height: 39px;
border: 4px solid #fd0000;
border-radius: 3px;
}

/* document viewer */
.viewer {
display: flex;
flex-direction: column;
flex: 1;
min-width: 0;
}

.form-tools {
display: flex;
align-items: center;
justify-content: flex-end;
flex: none;
gap: 15px;
height: 36px;
padding-right: 6px;
}

.form-tools svg,
.pdf-tools svg {
width: 18px;
height: 18px;
}

.pdf-tools {
display: flex;
align-items: center;
justify-content: flex-end;
flex: none;
gap: 25px;
height: 42px;
padding-right: 14px;
border-top: 1px solid #b5b5b5;
border-bottom: 1px solid #8a8a8a;
background: linear-gradient(#515151, #424242);
}

.split {
width: 1px;
height: 20px;
margin: 0 -9px;
background: #1d1d1d;
}

.pdf-body {
display: flex;
flex: 1;
background: #3e3e3e;
}

.pdf-page {
width: 303px;
margin-right: auto;
background: #fff;
box-shadow: 2px 0 8px rgba(0, 0, 0, 0.6);
}

.pdf-scroll {
display: flex;
flex-direction: column;
align-items: center;
width: 19px;
padding: 8px 0 7px;
background: #f1f1f1;
}

.arrow {
border: 5px solid transparent;
}

.arrow.up {
border-top: 0;
border-bottom-color: #505050;
}

.arrow.down {
margin-top: auto;
border-bottom: 0;
border-top-color: #505050;
}

.thumb {
width: 16px;
height: 349px;
margin-top: 12px;
background: #c1c1c1;
}

/* taskbar */
.taskbar {
display: flex;
flex: none;
height: 49px;
background: linear-gradient(to right, #2a2f4e, #2f3448 40%, #263053);
color: #fff;
}

.start {
flex: none;
width: 60px;
}

.start svg {
width: 20px;
height: 20px;
}

.task-search {
display: flex;
align-items: center;
flex: none;
width: 430px;
padding-left: 15px;
border-top: 1px solid #bbb;
background: #f1f1f1;
}

.task-search svg {
width: 20px;
height: 20px;
}

.task-search input {
flex: 1;
margin-left: 15px;
font-size: 18px;
}

.task-search input::placeholder {
color: #333;
}

.apps {
display: flex;
flex: none;
padding-left: 2px;
}

.apps button {
width: 60px;
position: relative;
}

.apps svg {
width: 30px;
height: 30px;
}

.apps .open::after {
content: "";
position: absolute;
left: 6px;
right: 6px;
bottom: 0;
height: 2px;
background: #76b9ed;
}

.apps .current {
background: #5d6274;
}

.apps .open.current::after {
left: 0;
right: 0;
}

.tray {
display: flex;
align-items: center;
justify-content: flex-end;
flex: 1;
white-space: nowrap;
}

.charge {
position: relative;
flex: none;
width: 62px;
margin-right: 10px;
border: 3px solid #fff;
background: #149a43;
font-size: 16px;
line-height: 20px;
text-align: center;
}

.charge::after {
content: "";
position: absolute;
right: -6px;
top: 5px;
width: 3px;
height: 10px;
background: #fff;
}

.plug {
width: 11px;
height: 20px;
}

.tray-icon {
width: 20px;
height: 20px;
margin-left: 10px;
}

.lang,
.clock {
width: 30px;
margin-left: 13px;
font-size: 15px;
line-height: 22px;
text-align: center;
}

.clock {
width: 66px;
margin-left: 17px;
}

.notes {
position: relative;
width: 31px;
margin: 0 13px 0 25px;
}

.notes svg {
width: 20px;
height: 20px;
}

.notes span {
position: absolute;
right: 0;
top: 8px;
width: 24px;
border: 1px solid #999;
border-radius: 50%;
background: #333;
font-size: 13px;
line-height: 22px;
text-align: center;
}

.peek {
width: 1px;
height: 49px;
margin-right: 4px;
background: #8a8fa0;
}
```
